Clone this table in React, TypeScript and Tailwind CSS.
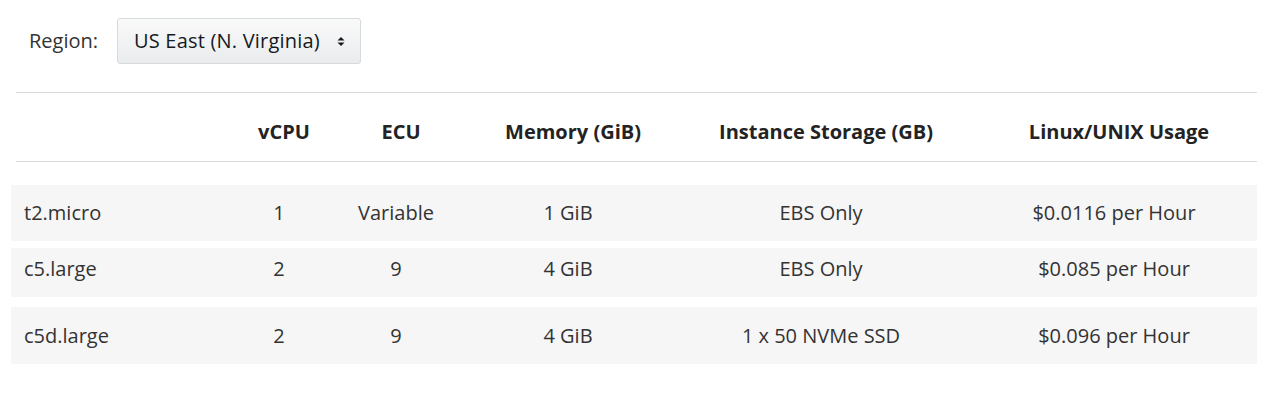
const rows = [
    { name: "t2.micro", vcpu: "1", ecu: "Variable", memory: "1 GiB", storage: "EBS Only", price: "$0.0116 per Hour", h: "h-[56px]", mt: "mt-0" },
    { name: "c5.large", vcpu: "2", ecu: "9", memory: "4 GiB", storage: "EBS Only", price: "$0.085 per Hour", h: "h-[49px] pb-2", mt: "mt-[7px]" },
    { name: "c5d.large", vcpu: "2", ecu: "9", memory: "4 GiB", storage: "1 x 50 NVMe SSD", price: "$0.096 per Hour", h: "h-[57px]", mt: "mt-[10px]" },
];

const COLS = "grid grid-cols-[225px_86px_148px_196px_310px_276px]";

export default function App() {
    return (
        <div className="bg-white text-[#333] text-[20px] font-['Open_Sans',sans-serif] pl-[16px] pr-[19px] pt-[18px]">
            {/* Region selector */}
            <div className="flex items-center pl-[13px]">
                <span className="w-[88px]">Region:</span>
                <button className="flex items-center h-[46px] w-[244px] pl-[16px] pr-[15px] justify-between rounded-[3px] border border-[#d5dbdb] bg-gradient-to-b from-[#fafafa] to-[#e9ebed] text-[#16191f]">
                    <span className="tracking-[0.2px]">US East (N. Virginia)</span>
                    <svg width="8" height="11" viewBox="0 0 8 11" className="text-[#16191f]">
                        <path d="M4 1 L7.5 4.5 H0.5 Z" fill="currentColor" />
                        <path d="M4 10 L7.5 6.5 H0.5 Z" fill="currentColor" />
                    </svg>
                </button>
            </div>

            {/* Header */}
            <div className={`${COLS} mt-[28px] h-[70px] pt-[10px] items-center border-y border-[#d5dbdb] font-bold text-[#232323]`}>
                <div />
                <div className="text-center">vCPU</div>
                <div className="text-center">ECU</div>
                <div className="text-center">Memory (GiB)</div>
                <div className="text-center">Instance Storage (GB)</div>
                <div className="text-center">Linux/UNIX Usage</div>
            </div>

            {/* Rows */}
            <div className="pt-[23px] -ml-[5px]">
                {rows.map((r) => (
                    <div key={r.name} className={`${COLS} ${r.h} ${r.mt} items-center bg-[#f6f6f6]`}>
                        <div className="pl-[13px]">{r.name}</div>
                        <div className="text-center">{r.vcpu}</div>
                        <div className="text-center">{r.ecu}</div>
                        <div className="text-center">{r.memory}</div>
                        <div className="text-center">{r.storage}</div>
                        <div className="text-center">{r.price}</div>
                    </div>
                ))}
            </div>
        </div>
    );
}
